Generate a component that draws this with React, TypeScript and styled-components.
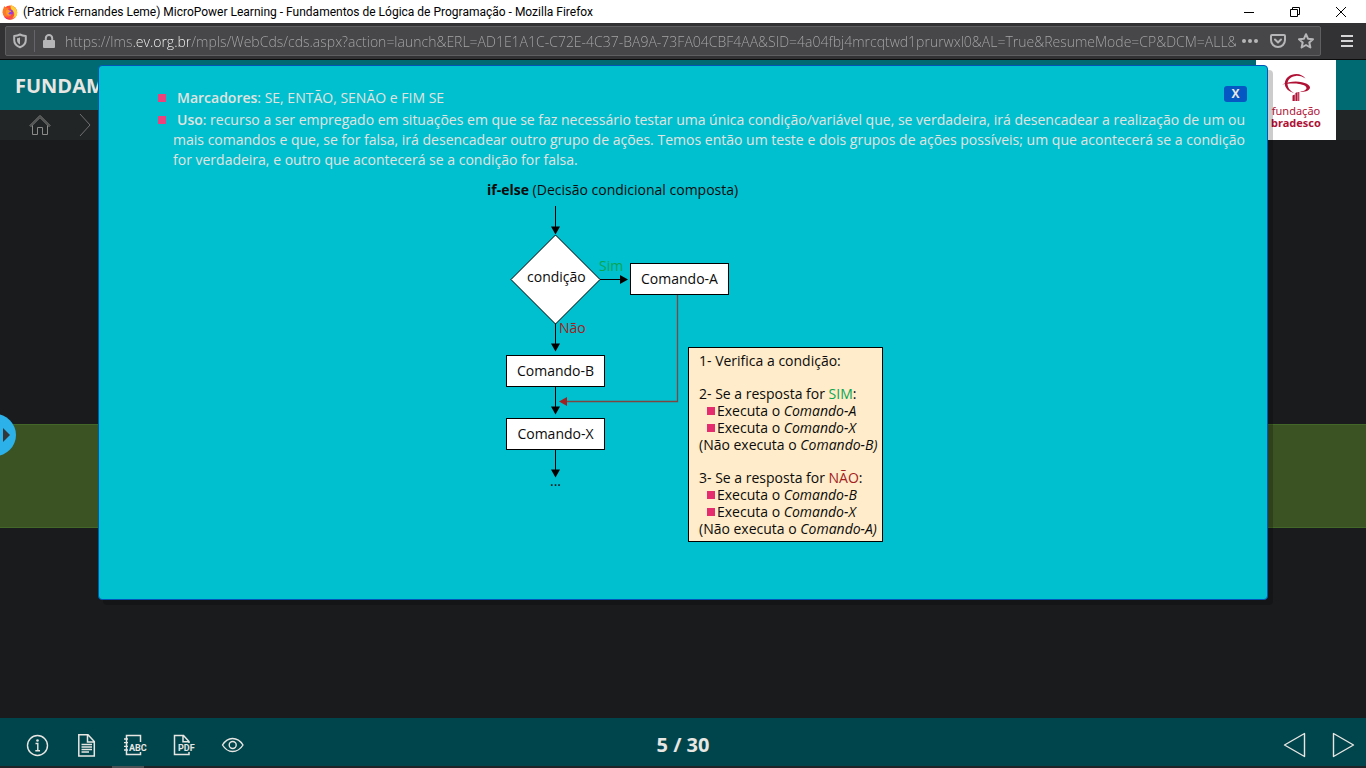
import React from "react";
import styled, { createGlobalStyle, css } from "styled-components";

const GlobalStyle = createGlobalStyle`
  *, *::before, *::after { box-sizing: border-box; }
  html, body { margin: 0; padding: 0; }
  body { background: #1a1b1d; font-family: "Open Sans", "Noto Sans", sans-serif; }
  button { margin: 0; padding: 0; border: 0; background: none; font: inherit; color: inherit; cursor: pointer; }
  svg { display: block; flex: none; }
`;

const Window = styled.div`
  display: flex;
  flex-direction: column;
  min-height: 100vh;
`;

/* ---------- browser chrome ---------- */

const TitleBar = styled.div`
  display: flex;
  align-items: center;
  height: 23px;
  padding: 0 2px;
  background: #fff;
  color: #000;
`;

const WindowTitle = styled.span`
  flex: 1;
  margin-left: 5px;
  font-family: Roboto, sans-serif;
  font-size: 12px;
  line-height: 16px;
  white-space: nowrap;
  overflow: hidden;
`;

const WindowButton = styled.button`
  display: flex;
  align-items: center;
  justify-content: center;
  width: 46px;
  height: 20px;
`;

const Toolbar = styled.div`
  display: flex;
  align-items: center;
  height: 37px;
  padding: 0 13px 0 5px;
  background: #323234;
  border-bottom: 1px solid #0c0c0d;
`;

const AddressBox = styled.div`
  display: flex;
  flex: 1;
  align-items: center;
  min-width: 0;
  height: 30px;
  padding: 0 6px 0 7px;
  background: #474749;
  border: 1px solid #5f5f61;
  border-radius: 2px;
  color: #b6b6b8;
`;

const AddressDivider = styled.span`
  width: 1px;
  height: 22px;
  margin: 0 8px 0 7px;
  background: #66666a;
`;

const AddressInput = styled.input`
  flex: 1;
  min-width: 0;
  height: 24px;
  margin: 0 6px 0 10px;
  padding: 0;
  border: 0;
  outline: 0;
  font-family: "Open Sans", sans-serif;
  font-size: 14px;
  font-weight: 300;
  color: transparent;
  background: linear-gradient(90deg, #a9a9ab 69px, #fff 69px, #fff 124px, #a9a9ab 124px);
  background-clip: text;
  -webkit-background-clip: text;
`;

const BarButton = styled.button<{ $gap?: number }>`
  display: flex;
  margin-left: ${(p) => p.$gap ?? 0}px;
  color: #b6b6b8;
`;

/* ---------- course player ---------- */

const Player = styled.div`
  position: relative;
  display: flex;
  flex: 1;
  flex-direction: column;
  overflow: hidden;
`;

const CourseHeader = styled.header`
  display: flex;
  align-items: center;
  height: 50px;
  padding: 2px 15px 0;
  background: #006a72;
`;

const CourseTitle = styled.h1`
  margin: 0;
  color: #e8e6e3;
  font-size: 20px;
  line-height: 28px;
  font-weight: 700;
  white-space: nowrap;
`;

const Breadcrumb = styled.nav`
  display: flex;
  align-items: center;
  gap: 28px;
  height: 30px;
  padding-left: 29px;
  background: #222526;
  color: #6f7071;
`;

const HomeLink = styled.a`
  color: #8b8b8a;
`;

const BrandCard = styled.div`
  position: absolute;
  top: 0;
  right: 30px;
  display: flex;
  flex-direction: column;
  align-items: center;
  width: 80px;
  height: 80px;
  padding-top: 13px;
  background: #fff;
  color: #b01236;
`;

const BrandName = styled.span<{ $bold?: boolean }>`
  font-family: "Noto Sans", sans-serif;
  font-size: 11px;
  line-height: 12px;
  font-weight: ${(p) => (p.$bold ? 700 : 400)};
`;

const Stage = styled.main`
  display: flex;
  flex: 1;
  flex-direction: column;
`;

const Spacer = styled.div<{ $grow: number }>`
  flex: ${(p) => p.$grow} 0 0;
`;

const Band = styled.div`
  height: 104px;
  background: #3b5222;
  border: solid #436629;
  border-width: 1px 0;
`;

const DrawerButton = styled.button`
  position: absolute;
  left: -26px;
  top: 354px;
  display: flex;
  align-items: center;
  justify-content: flex-end;
  width: 42px;
  height: 42px;
  padding-right: 6px;
  border-radius: 50%;
  background: #2cb1e8;
  color: #343638;
`;

/* ---------- dialog ---------- */

const Dialog = styled.section`
  position: absolute;
  top: 5px;
  left: 98px;
  right: 98px;
  padding: 22px 22px 55px;
  background: #00bfce;
  border: 1px solid #0254b8;
  border-radius: 4px;
  box-shadow: 5px 5px 0 rgba(0, 0, 0, 0.2);
`;

const CloseButton = styled.button`
  position: absolute;
  top: 20px;
  right: 20px;
  width: 23px;
  height: 16px;
  border-radius: 3px;
  background: #0557c3;
  color: #e8e6e3;
  font-size: 12px;
  line-height: 16px;
  font-weight: 700;
`;

const Points = styled.ul`
  display: flex;
  flex-direction: column;
  gap: 2px;
  margin: 0;
  padding: 0 0 0 37px;
  list-style: none;
  color: #e2e4e0;
`;

const Point = styled.li`
  display: flex;
  align-items: flex-start;
  gap: 7px;
`;

const PointText = styled.p`
  flex: 1;
  margin: 0;
  font-size: 14px;
  line-height: 20px;
  text-align: justify;
  text-indent: 4px;
`;

const Term = styled.b`
  font-weight: 600;
`;

const Square = styled.span<{ $size: number; $top?: number; $color?: string }>`
  flex: none;
  width: ${(p) => p.$size}px;
  height: ${(p) => p.$size}px;
  margin-top: ${(p) => p.$top ?? 0}px;
  background: ${(p) => p.$color ?? "#e42c6f"};
`;

const Figure = styled.figure`
  position: relative;
  width: 400px;
  height: 362px;
  margin: 12px auto 0;
  color: #0b0b0b;
  font-size: 14px;
  line-height: 20px;
`;

const Caption = styled.figcaption`
  padding-left: 4px;
  line-height: 16px;
  white-space: nowrap;
`;

const Lines = styled.svg`
  position: absolute;
  inset: 0;
`;

const placed = css<{ $x: number; $y: number }>`
  position: absolute;
  left: ${(p) => p.$x}px;
  top: ${(p) => p.$y}px;
`;

const Node = styled.div<{ $x: number; $y: number }>`
  ${placed}
  width: 99px;
  height: 32px;
  background: #fff;
  border: 1px solid #000;
  line-height: 30px;
  text-align: center;
`;

const Label = styled.span<{ $x: number; $y: number; $color?: string }>`
  ${placed}
  color: ${(p) => p.$color ?? "inherit"};
  white-space: nowrap;
`;

const Note = styled.div<{ $x: number; $y: number }>`
  ${placed}
  width: 195px;
  height: 195px;
  padding: 4px 0 0 10px;
  background: #ffecca;
  border: 1px solid #000;
  line-height: 17px;
  white-space: nowrap;
`;

const NoteLine = styled.p<{ $gap?: boolean }>`
  margin: ${(p) => (p.$gap ? 16 : 0)}px 0 0;
`;

const NoteItem = styled.p`
  display: flex;
  align-items: center;
  gap: 2px;
  margin: 0;
  padding-left: 8px;
`;

const Tinted = styled.span<{ $color: string }>`
  color: ${(p) => p.$color};
`;

/* ---------- footer ---------- */

const Footer = styled.footer`
  display: grid;
  grid-template-columns: 1fr auto 1fr;
  align-items: center;
  height: 48px;
  padding: 5px 11px 0;
  background: #00454c;
  color: #e8e6e3;
`;

const FooterGroup = styled.div<{ $end?: boolean }>`
  display: flex;
  align-items: center;
  gap: 25px;
  padding-left: 14px;
  justify-content: ${(p) => (p.$end ? "flex-end" : "flex-start")};
`;

const PageNumber = styled.span`
  font-size: 20px;
  line-height: 24px;
  font-weight: 700;
`;

const TaskStrip = styled.div`
  height: 2px;
  padding-left: 112px;
  background: #1f2426;
`;

const TaskMark = styled.div`
  width: 32px;
  height: 2px;
  background: #4b5152;
`;

const IconText = styled.text`
  font-family: Roboto, sans-serif;
  font-size: 9px;
  font-weight: 700;
  fill: currentColor;
  stroke: none;
`;

const GREEN = "#0aa650";
const RED = "#a32020";

const FirefoxIcon = () => (
  <svg width="16" height="16" viewBox="0 0 16 16" aria-hidden="true">
    <circle cx="8" cy="8.600" r="7.200" fill="#ff4f3a" />
    <path d="M9.200.4c1 1.600 3.400 2.200 4.800 4.400 1.800 2.800 1.400 6.600-.8 8.800-2.200 2.200-5.600 2.600-8 1.400 3.800.6 6.800-1.400 7-4.600.2-2.400-1.200-3.600-2.600-4.600C8.400 4.600 8.200 2.200 9.200.4z" fill="#ffcf35" />
    <path d="M1.500 4.200c.2-1 .7-1.700 1.200-2.100 0 .8.400 1.400.9 1.700 1.100-.3 2.200-.1 3.200.6L4 8.400c.3 2 1.700 3.400 3.700 3.500-3.200 1.600-6 .2-6.900-2.700-.4-1.800 0-3.700.7-5z" fill="#ff7a24" />
    <circle cx="8" cy="8.400" r="3" fill="#8a3ff0" />
    <path d="M4.200 6.300c1.300-.9 2.600-.5 3.400.2l1.800.4c-.3 1-1.300 1-1.900 1.300-.5.500-.6 1.200-1.300 1.300.7 1 2.500 1.200 3.600.4-.8 2.200-4 2.600-5.500.4-.7-1.200-.6-2.800-.1-4z" fill="#ff9a2a" />
    <path d="M1.600 12c2.600 3.200 8.200 3.800 11.600.8-2.800 4-9 3.600-11.600-.8z" fill="#e3207b" />
  </svg>
);

const BrandIcon = () => (
  <svg width="30" height="32" viewBox="0 0 30 32" fill="currentColor" aria-hidden="true">
    <path d="M13 20C7.500 18.500 3.800 15 3.800 10.500C4 5 9 1 15.500 1C19 1 22 2.500 24.500 5.500C21 3.400 18 2.700 15 2.900C10 3.300 6.600 6.500 6.500 10.500C6.500 14.500 9 17.800 13 20Z" />
    <path d="M1 11.500C8 8.500 15 7.900 21 9.300C26 10.500 29 12.300 29 14.600C28.800 17.600 24 19.500 18.500 18.800C22.500 18.300 25.500 17 25.500 15C25.500 13 22.500 11.600 18 10.900C12 10.100 6 10.900 1 11.500Z" />
    <path d="M11.500 22.500L13.800 21.500V28H11.500ZM14.400 20L16.600 19V28H14.400ZM17.200 19H18.300V28H17.200Z" />
  </svg>
);

const ARROW_PATHS =
  "M72.500 52.500L68 44.500H77ZM72.500 169.500L68 161.500H77ZM72.500 232.500L68 224.500H77ZM72.500 295.500L68 287.500H77ZM145 97.500L137 93V102Z";

const Flowchart = () => (
  <Figure>
    <Caption>
      <b>if-else</b> (Decisão condicional composta)
    </Caption>
    <Lines width="400" height="362" viewBox="0 0 400 362" aria-hidden="true">
      <path d="M72.500 24V46M72.500 140V163M72.500 204V227M72.500 267V290M117 97.500H140" stroke="#000" fill="none" />
      <path d={ARROW_PATHS} fill="#000" />
      <path d="M72.500 53L117 97.500L72.500 142L28 97.500Z" fill="#fff" stroke="#000" />
      <path d="M194.500 113V219.500H82" stroke="#7d4640" strokeWidth="1.300" fill="none" />
      <path d="M76 219.500L84 215V224Z" fill="#a32020" />
    </Lines>
    <Label $x={44} $y={85}>condição</Label>
    <Label $x={116} $y={74} $color={GREEN}>Sim</Label>
    <Label $x={76} $y={136} $color={RED}>Não</Label>
    <Node $x={147} $y={81}>Comando-A</Node>
    <Node $x={23} $y={173}>Comando-B</Node>
    <Node $x={23} $y={236}>Comando-X</Node>
    <Label $x={67} $y={289}>...</Label>
    <Note $x={205} $y={165}>
      <NoteLine>1- Verifica a condição:</NoteLine>
      <NoteLine $gap>2- Se a resposta for <Tinted $color={GREEN}>SIM</Tinted>:</NoteLine>
      <NoteItem><Square $size={8} /><span>Executa o <i>Comando-A</i></span></NoteItem>
      <NoteItem><Square $size={8} /><span>Executa o <i>Comando-X</i></span></NoteItem>
      <NoteLine>(Não executa o <i>Comando-B)</i></NoteLine>
      <NoteLine $gap>3- Se a resposta for <Tinted $color={RED}>NÃO</Tinted>:</NoteLine>
      <NoteItem><Square $size={8} /><span>Executa o <i>Comando-B</i></span></NoteItem>
      <NoteItem><Square $size={8} /><span>Executa o <i>Comando-X</i></span></NoteItem>
      <NoteLine>(Não executa o <i>Comando-A)</i></NoteLine>
    </Note>
  </Figure>
);

export default function App() {
  return (
    <Window>
      <GlobalStyle />
      <TitleBar>
        <FirefoxIcon />
        <WindowTitle>(Patrick Fernandes Leme) MicroPower Learning - Fundamentos de Lógica de Programação - Mozilla Firefox</WindowTitle>
        <WindowButton aria-label="Minimizar">
          <svg width="10" height="10" viewBox="0 0 10 10"><path d="M0 5.500H10" stroke="#000" /></svg>
        </WindowButton>
        <WindowButton aria-label="Restaurar">
          <svg width="10" height="10" viewBox="0 0 10 10" fill="none" stroke="#000"><path d="M.5 2.500H7.500V9.500H.5ZM2.500 2.500V.5H9.500V7.500H7.500" /></svg>
        </WindowButton>
        <WindowButton aria-label="Fechar">
          <svg width="10" height="10" viewBox="0 0 10 10" stroke="#000"><path d="M0 0L10 10M10 0L0 10" /></svg>
        </WindowButton>
      </TitleBar>

      <Toolbar>
        <AddressBox>
          <BarButton aria-label="Proteção">
            <svg width="14" height="16" viewBox="0 0 14 16" fill="none">
              <path d="M7 1.500C5 2.500 3 2.800 1.200 2.900V7c0 3.500 2.300 6 5.800 7.300C10.500 13 12.800 10.500 12.800 7V2.900C11 2.800 9 2.500 7 1.500Z" stroke="currentColor" strokeWidth="2" strokeLinejoin="round" />
              <path d="M7 4.500C6 5 5 5.200 4 5.300V7c0 2.200 1.200 3.700 3 4.600Z" fill="currentColor" />
            </svg>
          </BarButton>
          <AddressDivider />
          <BarButton aria-label="Conexão segura">
            <svg width="12" height="14" viewBox="0 0 12 14">
              <path d="M2.800 6.500V4.200a3.200 3.200 0 0 1 6.400 0V6.500" fill="none" stroke="currentColor" strokeWidth="2" />
              <rect x="0" y="6" width="12" height="8" rx="1" fill="currentColor" />
            </svg>
          </BarButton>
          <AddressInput
            aria-label="Endereço"
            readOnly
            value="https://lms.ev.org.br/mpls/WebCds/cds.aspx?action=launch&ERL=AD1E1A1C-C72E-4C37-BA9A-73FA04CBF4AA&SID=4a04fbj4mrcqtwd1prurwxl0&AL=True&ResumeMode=CP&DCM=ALL&"
          />
          <BarButton aria-label="Ações da página">
            <svg width="16" height="16" viewBox="0 0 16 16" fill="currentColor"><circle cx="2" cy="8" r="2" /><circle cx="8" cy="8" r="2" /><circle cx="14" cy="8" r="2" /></svg>
          </BarButton>
          <BarButton $gap={12} aria-label="Salvar no Pocket">
            <svg width="16" height="16" viewBox="0 0 16 16" fill="none" stroke="currentColor" strokeWidth="2" strokeLinecap="round" strokeLinejoin="round">
              <path d="M2 2H14Q15 2 15 3V7A7 7 0 0 1 1 7V3Q1 2 2 2ZM5 6.500L8 9.500L11 6.500" />
            </svg>
          </BarButton>
          <BarButton $gap={12} aria-label="Favoritar">
            <svg width="16" height="16" viewBox="0 0 16 16" fill="none" stroke="currentColor" strokeWidth="2" strokeLinejoin="round">
              <path d="M8 1.200L10 5.700L15 6.200L11.300 9.500L12.400 14.500L8 12L3.600 14.500L4.700 9.500L1 6.200L6 5.700Z" />
            </svg>
          </BarButton>
        </AddressBox>
        <BarButton $gap={20} aria-label="Abrir menu">
          <svg width="12" height="12" viewBox="0 0 12 12" fill="#d5d5d7"><path d="M0 0h12v2H0zM0 5h12v2H0zM0 10h12v2H0z" /></svg>
        </BarButton>
      </Toolbar>

      <Player>
        <CourseHeader>
          <CourseTitle>FUNDAMENTOS</CourseTitle>
        </CourseHeader>
        <Breadcrumb aria-label="Navegação">
          <HomeLink href="#" aria-label="Início">
            <svg width="22" height="22" viewBox="0 0 22 22" fill="none" stroke="currentColor" strokeLinejoin="round">
              <path d="M1 11.500L11 1.500L21 11.500L20 12.500L11 3.500L2 12.500ZM3.500 11.500V20.500H8.500V13.500H13.500V20.500H18.500V11.500" />
            </svg>
          </HomeLink>
          <svg width="12" height="24" viewBox="0 0 12 24" fill="none" stroke="currentColor"><path d="M1 1L11 12L1 23" /></svg>
        </Breadcrumb>
        <Stage>
          <Spacer $grow={3} />
          <Band />
          <Spacer $grow={2} />
        </Stage>

        <BrandCard>
          <BrandIcon />
          <BrandName>fundação</BrandName>
          <BrandName $bold>bradesco</BrandName>
        </BrandCard>

        <DrawerButton aria-label="Abrir painel">
          <svg width="7" height="14" viewBox="0 0 7 14"><path d="M0 0L7 7L0 14Z" fill="currentColor" /></svg>
        </DrawerButton>

        <Footer>
          <FooterGroup>
            <button aria-label="Informações">
              <svg width="24" height="24" viewBox="0 0 24 24" fill="none" stroke="currentColor">
                <circle cx="12.500" cy="12.500" r="10" strokeWidth="1.400" />
                <path d="M10.500 10.500H12.800V17.500M10.300 17.700H15" strokeWidth="1.400" />
                <circle cx="12.500" cy="7.500" r="1.300" fill="currentColor" stroke="none" />
              </svg>
            </button>
            <button aria-label="Texto">
              <svg width="24" height="24" viewBox="0 0 24 24" fill="none" stroke="currentColor" strokeWidth="1.500">
                <path d="M4.800 1.800H14L20.300 8.500V23H4.800ZM13.500 2V9H20.300" />
                <path d="M7.500 11.500H18M7.500 14H18M7.500 16.500H18M7.500 19H15" strokeWidth="1.300" />
              </svg>
            </button>
            <button aria-label="Glossário">
              <svg width="24" height="24" viewBox="0 0 24 24" fill="none" stroke="currentColor" strokeWidth="1.500" overflow="visible">
                <path d="M17.500 9V2.500H3.500V21.500H17.500V19" />
                <path d="M1 6H5M1 9.700H5M1 13.400H5M1 17H5" strokeWidth="1.300" />
                <IconText x="6" y="18">ABC</IconText>
              </svg>
            </button>
            <button aria-label="PDF">
              <svg width="24" height="24" viewBox="0 0 24 24" fill="none" stroke="currentColor" strokeWidth="1.500" overflow="visible">
                <path d="M17 19V21.500H2.500V2.500H11.500L17 8.500V10M11 3V8.800H17" />
                <IconText x="6" y="18">PDF</IconText>
              </svg>
            </button>
            <button aria-label="Visualizar">
              <svg width="24" height="24" viewBox="0 0 24 24" fill="none" stroke="currentColor" strokeWidth="1.400">
                <path d="M1.500 12C4 8 7.500 5.500 11.500 5.500S19.500 8 22 12C19.500 16 15.500 18.500 11.500 18.500S4 16 1.500 12Z" />
                <circle cx="11.700" cy="12" r="3.500" />
              </svg>
            </button>
          </FooterGroup>
          <PageNumber>5 / 30</PageNumber>
          <FooterGroup $end>
            <button aria-label="Anterior">
              <svg width="24" height="26" viewBox="0 0 24 26" fill="none" stroke="currentColor" strokeWidth="1.400" strokeLinejoin="round"><path d="M22.500 1.500V24.500L2.500 13Z" /></svg>
            </button>
            <button aria-label="Próximo">
              <svg width="24" height="26" viewBox="0 0 24 26" fill="none" stroke="currentColor" strokeWidth="1.400" strokeLinejoin="round"><path d="M2.500 1.500V24.500L22.500 13Z" /></svg>
            </button>
          </FooterGroup>
        </Footer>
        <TaskStrip><TaskMark /></TaskStrip>

        <Dialog role="dialog" aria-label="Decisão condicional composta">
          <Points>
            <Point>
              <Square $size={8} $top={6} $color="#ec437c" />
              <PointText><Term>Marcadores</Term>: SE, ENTÃO, SENÃO e FIM SE</PointText>
            </Point>
            <Point>
              <Square $size={8} $top={6} $color="#ec437c" />
              <PointText>
                <Term>Uso</Term>: recurso a ser empregado em situações em que se faz necessário testar uma única condição/variável que, se verdadeira, irá desencadear a realização de um ou mais comandos e que, se for falsa, irá desencadear outro grupo de ações. Temos então um teste e dois grupos de ações possíveis; um que acontecerá se a condição for verdadeira, e outro que acontecerá se a condição for falsa.
              </PointText>
            </Point>
          </Points>
          <Flowchart />
          <CloseButton aria-label="Fechar janela">X</CloseButton>
        </Dialog>
      </Player>
    </Window>
  );
}
